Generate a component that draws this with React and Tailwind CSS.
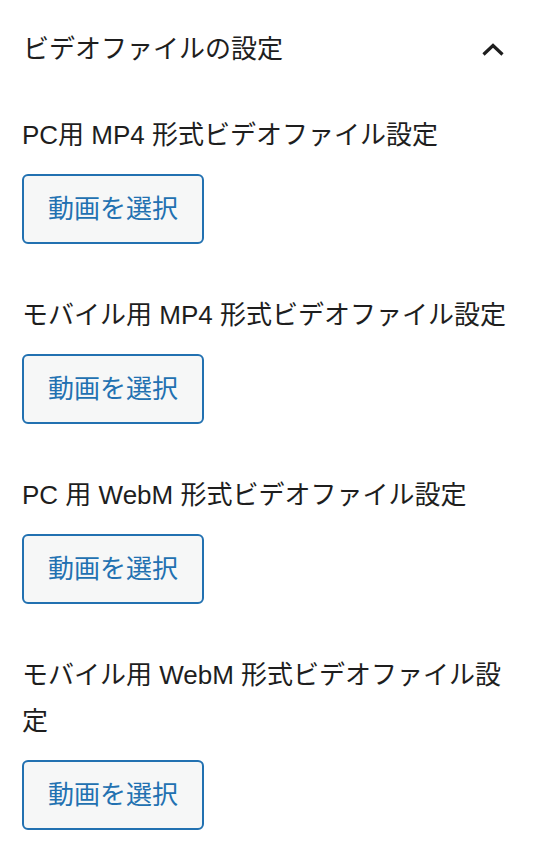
// Sidebar panel: video file settings
const fields = [
  "PC用 MP4 形式ビデオファイル設定",
  "モバイル用 MP4 形式ビデオファイル設定",
  "PC 用 WebM 形式ビデオファイル設定",
  "モバイル用 WebM 形式ビデオファイル設定",
];

function ChevronUp() {
  return (
    <svg width="24" height="14" viewBox="0 0 24 14" fill="none">
      <path d="M2.5 12.5 L12 3.5 L21.5 12.5" stroke="#1e1e1e" strokeWidth="3.2" />
    </svg>
  );
}

export default function App() {
  return (
    <div
      className="w-[540px] min-h-[868px] bg-white text-[#1e1e1e]"
      style={{ fontFamily: '"Liberation Sans", "Noto Sans CJK JP", sans-serif' }}
    >
      <div className="flex items-center justify-between pl-[23px] pr-[35px] pt-[3px] h-[94px]">
        <h2 className="text-[26px] leading-none font-normal">ビデオファイルの設定</h2>
        <ChevronUp />
      </div>
      <div className="pl-[22px] pr-[32px] pt-[18px]">
        {fields.map((label, i) => (
          <div key={i} className="mb-[48px]">
            <div className="text-[26px] leading-[46px] mb-[16px]">{label}</div>
            <button
              type="button"
              className="h-[70px] px-[24px] rounded-[6px] border-2 border-[#2271b1] bg-[#f6f7f7] text-[#2271b1] text-[26px] leading-none"
            >
              動画を選択
            </button>
          </div>
        ))}
      </div>
    </div>
  );
}
